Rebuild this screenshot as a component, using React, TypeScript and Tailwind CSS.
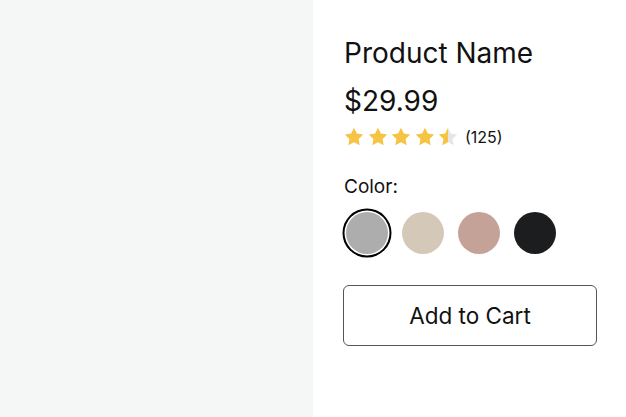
import React, { useState } from "react";

const SWATCHES = [
  { name: "Gray", color: "bg-[#adadad]" },
  { name: "Sand", color: "bg-[#d4c8b9]" },
  { name: "Rose", color: "bg-[#c4a298]" },
  { name: "Black", color: "bg-[#1c1d1f]" },
];

function Star({ fill }: { fill: "full" | "half" }) {
  const id = "half-grad";
  return (
    <svg viewBox="0 0 24 24" className="h-[20px] w-[20px]">
      {fill === "half" && (
        <defs>
          <linearGradient id={id} x1="0" x2="1" y1="0" y2="0">
            <stop offset="50%" stopColor="#f6c443" />
            <stop offset="50%" stopColor="#e6e6e6" />
          </linearGradient>
        </defs>
      )}
      <path
        d="M12 .9l3.4 6.9 7.6 1.1-5.5 5.4 1.3 7.6L12 18.3l-6.8 3.6 1.3-7.6L1 8.9l7.6-1.1z"
        fill={fill === "half" ? `url(#${id})` : "#f6c443"}
      />
    </svg>
  );
}

export default function App() {
  const [selected, setSelected] = useState(0);

  return (
    <div className="flex h-[417px] w-full font-['Inter',sans-serif] text-[#111]">
      {/* image placeholder */}
      <div className="h-full w-[313px] shrink-0 bg-[#f5f7f6]" />

      <div className="flex flex-1 flex-col bg-white pl-[31px] pt-[35px]">
        <h1 className="text-[28px] leading-[36px] font-normal">Product Name</h1>
        <p className="mt-[12px] text-[28px] leading-[36px]">$29.99</p>

        <div className="mt-[8px] flex items-center">
          <div className="flex gap-[3.5px]">
            <Star fill="full" />
            <Star fill="full" />
            <Star fill="full" />
            <Star fill="full" />
            <Star fill="half" />
          </div>
          <span className="ml-[7px] text-[16px] leading-none">(125)</span>
        </div>

        <p className="mt-[28px] text-[19px] leading-[24px]">Color:</p>
        <div className="mt-[13px] flex gap-[14px] pl-[2px]">
          {SWATCHES.map((s, i) => (
            <button
              key={s.name}
              aria-label={s.name}
              onClick={() => setSelected(i)}
              className={`h-[42px] w-[42px] rounded-full ${s.color} ${
                selected === i ? "ring-2 ring-black ring-offset-[1.5px] ring-offset-white" : ""
              }`}
            />
          ))}
        </div>

        <button className="mt-[31px] h-[61px] w-[254px] -ml-px rounded-[6px] border border-[#555] text-[22.5px] text-[#111]">
          Add to Cart
        </button>
      </div>
    </div>
  );
}
